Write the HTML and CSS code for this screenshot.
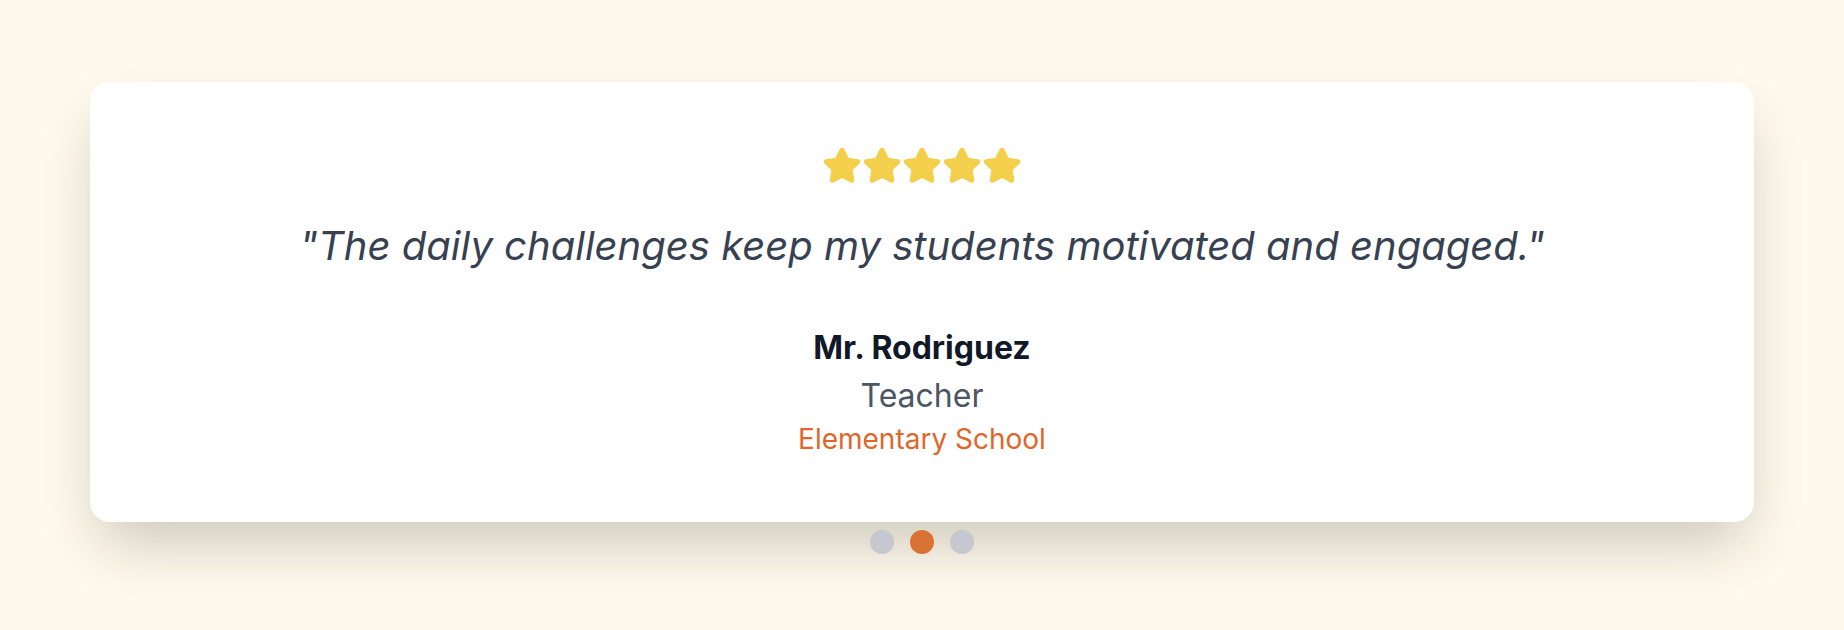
FILE: index.html
```html
<!DOCTYPE html>
<html lang="en">
<head>
<meta charset="utf-8">
<title>Testimonial</title>
<link rel="stylesheet" href="styles.css">
</head>
<body>
<main class="page">
  <section class="card">
    <div class="stars" aria-label="5 out of 5 stars">
      <svg class="star" viewBox="0 0 24 24"><path d="M11.525 2.295a.53.53 0 0 1 .95 0l2.31 4.679a2.123 2.123 0 0 0 1.595 1.16l5.166.756a.53.53 0 0 1 .294.904l-3.736 3.638a2.123 2.123 0 0 0-.611 1.878l.882 5.14a.53.53 0 0 1-.771.56l-4.618-2.428a2.122 2.122 0 0 0-1.973 0L6.396 21.01a.53.53 0 0 1-.77-.56l.881-5.139a2.122 2.122 0 0 0-.611-1.879L2.16 9.795a.53.53 0 0 1 .294-.906l5.165-.755a2.122 2.122 0 0 0 1.597-1.16z"/></svg>
      <svg class="star" viewBox="0 0 24 24"><path d="M11.525 2.295a.53.53 0 0 1 .95 0l2.31 4.679a2.123 2.123 0 0 0 1.595 1.16l5.166.756a.53.53 0 0 1 .294.904l-3.736 3.638a2.123 2.123 0 0 0-.611 1.878l.882 5.14a.53.53 0 0 1-.771.56l-4.618-2.428a2.122 2.122 0 0 0-1.973 0L6.396 21.01a.53.53 0 0 1-.77-.56l.881-5.139a2.122 2.122 0 0 0-.611-1.879L2.16 9.795a.53.53 0 0 1 .294-.906l5.165-.755a2.122 2.122 0 0 0 1.597-1.16z"/></svg>
      <svg class="star" viewBox="0 0 24 24"><path d="M11.525 2.295a.53.53 0 0 1 .95 0l2.31 4.679a2.123 2.123 0 0 0 1.595 1.16l5.166.756a.53.53 0 0 1 .294.904l-3.736 3.638a2.123 2.123 0 0 0-.611 1.878l.882 5.14a.53.53 0 0 1-.771.56l-4.618-2.428a2.122 2.122 0 0 0-1.973 0L6.396 21.01a.53.53 0 0 1-.77-.56l.881-5.139a2.122 2.122 0 0 0-.611-1.879L2.16 9.795a.53.53 0 0 1 .294-.906l5.165-.755a2.122 2.122 0 0 0 1.597-1.16z"/></svg>
      <svg class="star" viewBox="0 0 24 24"><path d="M11.525 2.295a.53.53 0 0 1 .95 0l2.31 4.679a2.123 2.123 0 0 0 1.595 1.16l5.166.756a.53.53 0 0 1 .294.904l-3.736 3.638a2.123 2.123 0 0 0-.611 1.878l.882 5.14a.53.53 0 0 1-.771.56l-4.618-2.428a2.122 2.122 0 0 0-1.973 0L6.396 21.01a.53.53 0 0 1-.77-.56l.881-5.139a2.122 2.122 0 0 0-.611-1.879L2.16 9.795a.53.53 0 0 1 .294-.906l5.165-.755a2.122 2.122 0 0 0 1.597-1.16z"/></svg>
      <svg class="star" viewBox="0 0 24 24"><path d="M11.525 2.295a.53.53 0 0 1 .95 0l2.31 4.679a2.123 2.123 0 0 0 1.595 1.16l5.166.756a.53.53 0 0 1 .294.904l-3.736 3.638a2.123 2.123 0 0 0-.611 1.878l.882 5.14a.53.53 0 0 1-.771.56l-4.618-2.428a2.122 2.122 0 0 0-1.973 0L6.396 21.01a.53.53 0 0 1-.77-.56l.881-5.139a2.122 2.122 0 0 0-.611-1.879L2.16 9.795a.53.53 0 0 1 .294-.906l5.165-.755a2.122 2.122 0 0 0 1.597-1.16z"/></svg>
    </div>
    <blockquote class="quote">"The daily challenges keep my students motivated and engaged."</blockquote>
    <div class="author">
      <p class="name">Mr. Rodriguez</p>
      <p class="role">Teacher</p>
      <p class="school">Elementary School</p>
    </div>
  </section>
  <nav class="dots" aria-label="Testimonials">
    <span class="dot"></span>
    <span class="dot dot-active"></span>
    <span class="dot"></span>
  </nav>
</main>
</body>
</html>
```

FILE: styles.css
```css
* { box-sizing: border-box; }

html, body {
  margin: 0;
  padding: 0;
}

body {
  background: #fdf9ec;
  font-family: Inter, "Noto Sans", "Liberation Sans", sans-serif;
  height: 630px;
  overflow: hidden;
}

.page {
  padding: 82px 90px 0;
  display: flex;
  flex-direction: column;
  align-items: center;
}

.card {
  width: 100%;
  background: #ffffff;
  border-radius: 20px;
  box-shadow: 0 30px 60px -12px rgba(40, 35, 15, 0.24);
  padding: 64px 64px 65px;
  display: flex;
  flex-direction: column;
  align-items: center;
  text-align: center;
}

.stars {
  display: flex;
  height: 40px;
}

.star {
  width: 40px;
  height: 40px;
  fill: #f3cf4b;
  stroke: #f3cf4b;
  stroke-width: 2;
  stroke-linejoin: round;
}

.quote {
  margin: 30px 0 0;
  font-size: 40px;
  line-height: 60px;
  font-style: italic;
  color: #374151;
}

.author {
  margin-top: 52px;
  display: flex;
  flex-direction: column;
  align-items: center;
}

.name {
  margin: 0;
  font-size: 32px;
  line-height: 40px;
  font-weight: 700;
  color: #111827;
}

.role {
  margin: 8px 0 0;
  font-size: 32px;
  line-height: 40px;
  color: #4b5563;
}

.school {
  margin: 5px 0 0;
  font-size: 28px;
  line-height: 36px;
  color: #e0662a;
}

.dots {
  margin-top: 8px;
  display: flex;
  gap: 16px;
}

.dot {
  width: 24px;
  height: 24px;
  border-radius: 50%;
  background: #c5c8ce;
}

.dot-active {
  background: #d97333;
}
```
